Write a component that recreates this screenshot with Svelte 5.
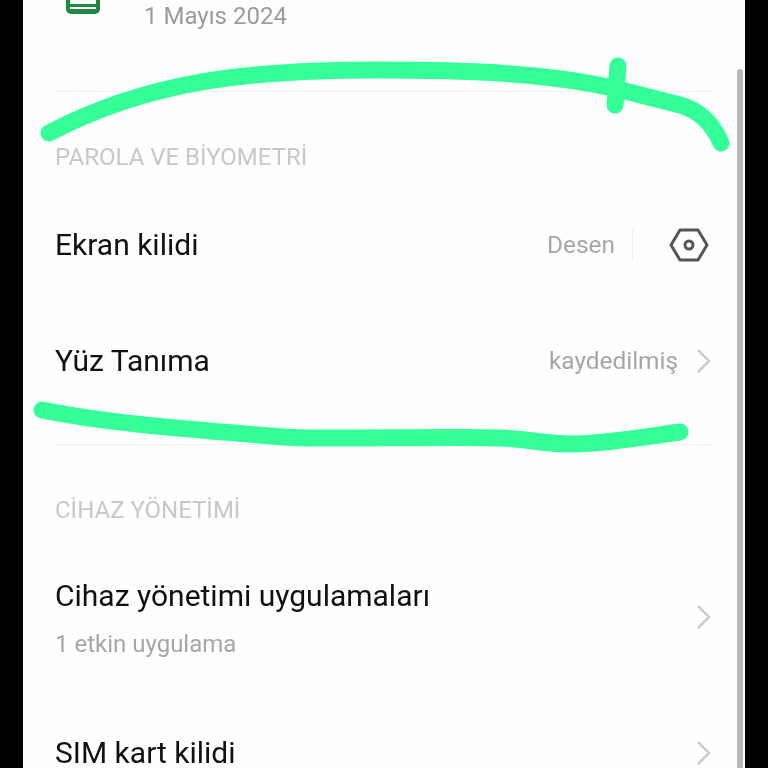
<script>
  const strokes = [
    "M49 133 C150 80 250 70 380 70 C460 70 540 72 613 88 C640 95 660 100 680 105 C698 110 712 122 721 143",
    "M618 66 L615 105",
    "M42 410 C110 424 200 430 283 437 C320 440 440 436 503 438 C528 439 550 445 577 444 C610 443 645 437 680 432"
  ];
</script>

<div class="screen">
  <div class="head">
    <div class="app-icon"><span></span></div>
    <div class="date">1 Mayıs 2024</div>
  </div>
  <div class="rule first"></div>

  <div class="label l1">PAROLA VE BİYOMETRİ</div>

  <div class="row r-ekran">
    <div class="title">Ekran kilidi</div>
    <div class="value">Desen</div>
    <div class="sep"></div>
    <svg class="hex" viewBox="0 0 40 36" width="40" height="36" aria-hidden="true">
      <path d="M11 3 H29 L38 18 L29 33 H11 L2 18 Z" fill="none" stroke="#555" stroke-width="3" stroke-linejoin="round"/>
      <circle cx="20" cy="18" r="4" fill="none" stroke="#555" stroke-width="3"/>
    </svg>
  </div>

  <div class="row r-yuz">
    <div class="title">Yüz Tanıma</div>
    <div class="value v2">kaydedilmiş</div>
    <svg class="chev" viewBox="0 0 16 26" width="16" height="26" aria-hidden="true"><path d="M2 2 L13 13 L2 24" fill="none" stroke="#cdcdcd" stroke-width="2.6"/></svg>
  </div>

  <div class="rule second"></div>

  <div class="label l2">CİHAZ YÖNETİMİ</div>

  <div class="row r-cihaz">
    <div class="stack">
      <div class="title">Cihaz yönetimi uygulamaları</div>
      <div class="sub">1 etkin uygulama</div>
    </div>
    <svg class="chev" viewBox="0 0 16 26" width="16" height="26" aria-hidden="true"><path d="M2 2 L13 13 L2 24" fill="none" stroke="#cdcdcd" stroke-width="2.6"/></svg>
  </div>

  <div class="row r-sim">
    <div class="title">SIM kart kilidi</div>
    <svg class="chev" viewBox="0 0 16 26" width="16" height="26" aria-hidden="true"><path d="M2 2 L13 13 L2 24" fill="none" stroke="#cdcdcd" stroke-width="2.6"/></svg>
  </div>

  <div class="scrollbar"></div>

  <svg class="ink" viewBox="0 0 722 768" width="722" height="768" aria-hidden="true">
    <g transform="translate(-23 0)" fill="none" stroke="#34ff98" stroke-width="17" stroke-linecap="round" stroke-linejoin="round">
      {#each strokes as d}<path {d} />{/each}
    </g>
  </svg>
</div>

<style>
  :global(body) { margin: 0; background: #000; }
  .screen {
    position: relative;
    box-sizing: border-box;
    width: 722px;
    height: 768px;
    margin-left: 23px;
    padding: 0 33px 0 32px;
    overflow: hidden;
    background: #fefefe;
    font-family: Roboto, "Liberation Sans", sans-serif;
    color: #111;
    filter: blur(0.45px);
  }
  .head { display: flex; height: 32px; align-items: flex-end; }
  .app-icon {
    box-sizing: border-box;
    flex: none;
    width: 34px;
    height: 46px;
    margin: -32px 0 18px 11px;
    border: 4px solid #23883f;
    border-bottom-width: 5px;
    border-radius: 5px;
  }
  .app-icon span { display: block; height: 32px; border-bottom: 3px solid #23883f; }
  .date { margin-left: 44px; font-size: 24px; line-height: 32px; color: #9b9b9b; }
  .rule { height: 1px; background: #f1f1f1; }
  .first { margin-top: 59px; }
  .second { margin-top: 24px; }
  .label { font-size: 24px; line-height: 30px; color: #c8c8c8; }
  .l1 { margin-top: 50px; }
  .l2 { margin-top: 50px; }
  .row { display: flex; align-items: center; }
  .title { font-size: 30px; line-height: 36px; flex: none; }
  .value { margin-left: auto; font-size: 24.4px; line-height: 32px; color: #a6a6a6; }
  .r-ekran { height: 116px; margin-top: 15px; }
  .r-ekran .value { margin-right: 17px; }
  .sep { width: 1px; height: 32px; background: #ececec; margin-right: 36px; }
  .hex { margin-right: 3px; }
  .r-yuz { height: 116px; margin-bottom: 25px; }
  .v2 { margin-right: 18px; }
  .chev { margin-left: auto; flex: none; }
  .v2 + .chev { margin-left: 0; }
  .r-cihaz { height: 166px; margin-top: 11px; }
  .r-cihaz .chev { margin-bottom: 4px; }
  .stack { display: flex; flex-direction: column; gap: 14px; }
  .sub { font-size: 24px; line-height: 32px; color: #a6a6a6; }
  .r-sim { height: 60px; margin-top: 21px; }
  .scrollbar {
    position: absolute;
    top: 69px;
    right: 2px;
    width: 6px;
    height: 699px;
    border-radius: 3px 3px 0 0;
    background: #b9b9b9;
  }
  .ink { position: absolute; top: 0; left: 0; pointer-events: none; }
</style>
